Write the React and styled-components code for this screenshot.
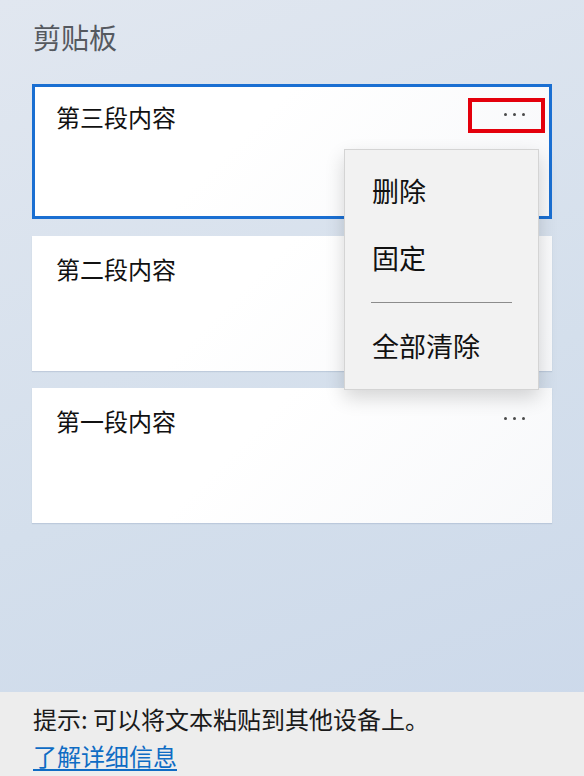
import React from 'react'
import styled, { createGlobalStyle } from 'styled-components'

const GlobalStyle = createGlobalStyle`
  html, body {
    margin: 0;
    padding: 0;
  }
  body {
    font-family: "Noto Sans CJK SC", "Noto Sans", sans-serif;
  }
  * {
    box-sizing: border-box;
  }
`

const Page = styled.div`
  width: 584px;
  height: 776px;
  display: flex;
  flex-direction: column;
  background: linear-gradient(160deg, #e1e7f0 0%, #d4dfec 55%, #cbd8ea 100%);
  overflow: hidden;
`

const Title = styled.h1`
  margin: 0;
  padding: 17px 0 0 33px;
  font-size: 28px;
  line-height: 40px;
  font-weight: 400;
  color: #55595f;
`

const CardList = styled.div`
  display: flex;
  flex-direction: column;
  gap: 17px;
  margin-top: 27px;
  padding: 0 32px;
`

const Card = styled.div`
  position: relative;
  z-index: ${({ selected }) => (selected ? 2 : 1)};
  height: 135px;
  padding: 17px 24px;
  display: flex;
  justify-content: space-between;
  align-items: flex-start;
  background: linear-gradient(135deg, #ffffff 40%, #f7f8fa 100%);
  box-shadow: ${({ selected }) =>
    selected ? 'inset 0 0 0 3px #1a6fd2' : '0 1px 1px rgba(120, 140, 170, 0.25)'};
`

const CardText = styled.p`
  margin: 0;
  font-size: 24px;
  line-height: 32px;
  color: #111;
`

const MoreButton = styled.div`
  display: flex;
  align-items: center;
  gap: 6px;
  height: 26px;
  padding-right: 3px;
`

const Dot = styled.span`
  width: 3px;
  height: 3px;
  border-radius: 50%;
  background: #4a4a4a;
`

/* red annotation box round the "more" button */
const Highlight = styled.div`
  position: absolute;
  left: 436px;
  top: 14px;
  width: 77px;
  height: 35px;
  border: 4px solid #e4000c;
`

const Menu = styled.div`
  position: absolute;
  left: 312px;
  top: 65px;
  width: 195px;
  padding: 9px 0 8px;
  background: #f2f2f2;
  border: 1px solid #d4d4d4;
  box-shadow: 0 8px 18px rgba(0, 0, 0, 0.16);
  z-index: 3;
`

const MenuItem = styled.div`
  height: 67px;
  display: flex;
  align-items: center;
  padding: 0 0 5px 27px;
  font-size: 27px;
  color: #111;
`

const Separator = styled.div`
  height: 1px;
  margin: 9px 26px 11px 26px;
  background: #8c8c8c;
`

const Footer = styled.div`
  margin-top: auto;
  height: 84px;
  padding: 7px 33px 0;
  background: #ededed;
`

const Hint = styled.p`
  margin: 0;
  font-size: 24px;
  line-height: 40px;
  color: #1a1a1a;
`

const Link = styled.a`
  display: inline-block;
  font-size: 24px;
  line-height: 34px;
  color: #0f6cc4;
  text-decoration: underline;
  text-underline-offset: 3px;
`

const More = () => (
  <MoreButton>
    <Dot />
    <Dot />
    <Dot />
  </MoreButton>
)

const items = [
  { id: 3, text: '第三段内容', selected: true },
  { id: 2, text: '第二段内容' },
  { id: 1, text: '第一段内容' },
]

export default function App() {
  return (
    <>
      <GlobalStyle />
      <Page>
        <Title>剪贴板</Title>
        <CardList>
          {items.map((item) => (
            <Card key={item.id} selected={item.selected}>
              <CardText>{item.text}</CardText>
              <More />
              {item.selected && (
                <>
                  <Highlight />
                  <Menu>
                    <MenuItem>删除</MenuItem>
                    <MenuItem>固定</MenuItem>
                    <Separator />
                    <MenuItem>全部清除</MenuItem>
                  </Menu>
                </>
              )}
            </Card>
          ))}
        </CardList>
        <Footer>
          <Hint>提示: 可以将文本粘贴到其他设备上。</Hint>
          <Link>了解详细信息</Link>
        </Footer>
      </Page>
    </>
  )
}
